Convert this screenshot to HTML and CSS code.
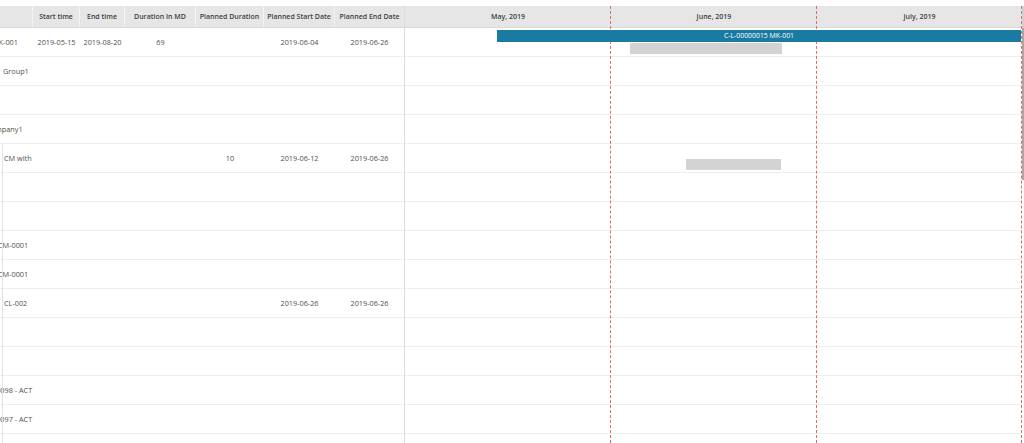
FILE: index.html
```html
<!DOCTYPE html>
<html>
<head>
<meta charset="utf-8">
<link rel="stylesheet" href="styles.css">
</head>
<body>
<div class="gantt">
  <div class="grid">
    <div class="ghead">
      <div class="hc c1"></div>
      <div class="hc c2">Start time</div>
      <div class="hc c3">End time</div>
      <div class="hc c4">Duration In MD</div>
      <div class="hc c5">Planned Duration</div>
      <div class="hc c6">Planned Start Date</div>
      <div class="hc c7">Planned End Date</div>
    </div>
    <div class="gbody">
      <div class="row"><div class="cell c1"><span class="name sh-mk">MK-001</span></div><div class="cell c2">2019-05-15</div><div class="cell c3">2019-08-20</div><div class="cell c4">69</div><div class="cell c5"></div><div class="cell c6">2019-06-04</div><div class="cell c7">2019-06-26</div></div>
      <div class="row"><div class="cell c1"><span class="name">Group1</span></div><div class="cell c2"></div><div class="cell c3"></div><div class="cell c4"></div><div class="cell c5"></div><div class="cell c6"></div><div class="cell c7"></div></div>
      <div class="row"><div class="cell c1"></div><div class="cell c2"></div><div class="cell c3"></div><div class="cell c4"></div><div class="cell c5"></div><div class="cell c6"></div><div class="cell c7"></div></div>
      <div class="row"><div class="cell c1"><span class="name sh-co">Company1</span></div><div class="cell c2"></div><div class="cell c3"></div><div class="cell c4"></div><div class="cell c5"></div><div class="cell c6"></div><div class="cell c7"></div></div>
      <div class="row lined"><div class="cell c1"><span class="name sh-cm">CM with activities</span></div><div class="cell c2"></div><div class="cell c3"></div><div class="cell c4"></div><div class="cell c5">10</div><div class="cell c6">2019-06-12</div><div class="cell c7">2019-06-26</div></div>
      <div class="row lined"><div class="cell c1"></div><div class="cell c2"></div><div class="cell c3"></div><div class="cell c4"></div><div class="cell c5"></div><div class="cell c6"></div><div class="cell c7"></div></div>
      <div class="row lined"><div class="cell c1"></div><div class="cell c2"></div><div class="cell c3"></div><div class="cell c4"></div><div class="cell c5"></div><div class="cell c6"></div><div class="cell c7"></div></div>
      <div class="row lined"><div class="cell c1"><span class="name sh-c">CM-0001</span></div><div class="cell c2"></div><div class="cell c3"></div><div class="cell c4"></div><div class="cell c5"></div><div class="cell c6"></div><div class="cell c7"></div></div>
      <div class="row lined"><div class="cell c1"><span class="name sh-c">CM-0001</span></div><div class="cell c2"></div><div class="cell c3"></div><div class="cell c4"></div><div class="cell c5"></div><div class="cell c6"></div><div class="cell c7"></div></div>
      <div class="row lined"><div class="cell c1"><span class="name sh-cm">CL-002</span></div><div class="cell c2"></div><div class="cell c3"></div><div class="cell c4"></div><div class="cell c5"></div><div class="cell c6">2019-06-26</div><div class="cell c7">2019-06-26</div></div>
      <div class="row lined"><div class="cell c1"></div><div class="cell c2"></div><div class="cell c3"></div><div class="cell c4"></div><div class="cell c5"></div><div class="cell c6"></div><div class="cell c7"></div></div>
      <div class="row lined"><div class="cell c1"></div><div class="cell c2"></div><div class="cell c3"></div><div class="cell c4"></div><div class="cell c5"></div><div class="cell c6"></div><div class="cell c7"></div></div>
      <div class="row lined"><div class="cell c1"><span class="name sh-num">00098 - ACT</span></div><div class="cell c2"></div><div class="cell c3"></div><div class="cell c4"></div><div class="cell c5"></div><div class="cell c6"></div><div class="cell c7"></div></div>
      <div class="row lined"><div class="cell c1"><span class="name sh-num">00097 - ACT</span></div><div class="cell c2"></div><div class="cell c3"></div><div class="cell c4"></div><div class="cell c5"></div><div class="cell c6"></div><div class="cell c7"></div></div>
      <div class="row lined"><div class="cell c1"></div><div class="cell c2"></div><div class="cell c3"></div><div class="cell c4"></div><div class="cell c5"></div><div class="cell c6"></div><div class="cell c7"></div></div>
    </div>
  </div>
  <div class="chart">
    <div class="chead">
      <div class="month">May, 2019</div>
      <div class="month">June, 2019</div>
      <div class="month">July, 2019</div>
    </div>
    <div class="cbody">
      <div class="crow"><div class="bar actual bar-main">C-L-00000015 MK-001</div><div class="bar planned bar-p1"></div></div>
      <div class="crow"></div>
      <div class="crow"></div>
      <div class="crow"></div>
      <div class="crow"><div class="bar planned bar-p2"></div></div>
      <div class="crow"></div>
      <div class="crow"></div>
      <div class="crow"></div>
      <div class="crow"></div>
      <div class="crow"></div>
      <div class="crow"></div>
      <div class="crow"></div>
      <div class="crow"></div>
      <div class="crow"></div>
      <div class="crow"></div>
    </div>
    <div class="lines">
      <div class="mline"></div>
      <div class="mline"></div>
      <div class="mline"></div>
    </div>
  </div>
  <div class="vscroll"><div class="thumb"></div></div>
</div>
</body>
</html>
```
FILE: styles.css
```css
* { box-sizing: border-box; }
html, body { margin: 0; padding: 0; background: #fff; overflow: hidden; }
body {
  font-family: "Open Sans", "Liberation Sans", sans-serif;
  font-size: 7.3px;
  color: #4f4f4f;
  padding-top: 6px;
}
.gantt {
  display: flex;
  width: 1024px;
  height: 437px;
  overflow: hidden;
}
.grid {
  width: 405px;
  flex: none;
  border-right: 1px solid #dcdcdc;
  overflow: hidden;
}
.ghead {
  display: flex;
  height: 22px;
  background: #e6e6e6;
  border-bottom: 1px solid #dadada;
}
.hc {
  display: flex;
  align-items: center;
  justify-content: center;
  font-size: 7px;
  font-weight: 600;
  color: #404040;
  white-space: nowrap;
  border-right: 1px solid #f4f4f4;
}
.hc.c7 { border-right: none; }
.c1 { width: 33px; }
.c2 { width: 47px; }
.c3 { width: 45px; }
.c4 { width: 71px; }
.c5 { width: 68px; }
.c6 { width: 71px; }
.c7 { width: 69px; }
.row {
  display: flex;
  height: 29px;
  border-bottom: 1px solid #eeeeee;
}
.row.lined { position: relative; }
.row.lined::before {
  content: "";
  position: absolute;
  left: 2px;
  top: 0;
  bottom: -1px;
  width: 1px;
  background: #e2e2e2;
}
.cell {
  display: flex;
  align-items: center;
  justify-content: center;
  white-space: nowrap;
  overflow: hidden;
}
.cell.c1 {
  justify-content: flex-start;
  padding-left: 3px;
}
.name { flex: none; color: #564f4b; }
.sh-mk { margin-left: -11px; }
.sh-co { margin-left: -17px; }
.sh-cm { margin-left: 1px; }
.sh-c { margin-left: -5px; }
.sh-num { margin-left: -11px; }

.chart {
  flex: 1;
  position: relative;
  overflow: hidden;
}
.chead {
  display: grid;
  grid-template-columns: 206px 206px 205px;
  height: 22px;
  background: #e6e6e6;
  border-bottom: 1px solid #dadada;
}
.month {
  display: flex;
  align-items: center;
  justify-content: center;
  font-size: 7px;
  font-weight: 600;
  color: #404040;
}
.crow {
  position: relative;
  height: 29px;
  border-bottom: 1px solid #eeeeee;
}
.bar {
  position: absolute;
  z-index: 2;
}
.actual {
  top: 2px;
  height: 12px;
  background: #197ba1;
  color: #fff;
  font-size: 6.9px;
  display: flex;
  align-items: center;
  justify-content: center;
  white-space: nowrap;
  line-height: 1;
}
.planned {
  top: 15px;
  height: 11px;
  background: #d3d3d3;
}
.bar-main { left: 92px; width: 524px; }
.bar-p1 { left: 225px; width: 152px; }
.bar-p2 { left: 281px; width: 95px; }
.lines {
  position: absolute;
  inset: 0;
  display: grid;
  grid-template-columns: 206px 206px 205px;
  z-index: 1;
  pointer-events: none;
}
.mline { border-right: 1px dashed #e06b6b; }
.vscroll {
  width: 2px;
  flex: none;
  padding-top: 22px;
  background: linear-gradient(#d0d0d0 0 22px, #fff 22px);
}
.thumb {
  height: 152px;
  background: #a8a8a8;
}
```
